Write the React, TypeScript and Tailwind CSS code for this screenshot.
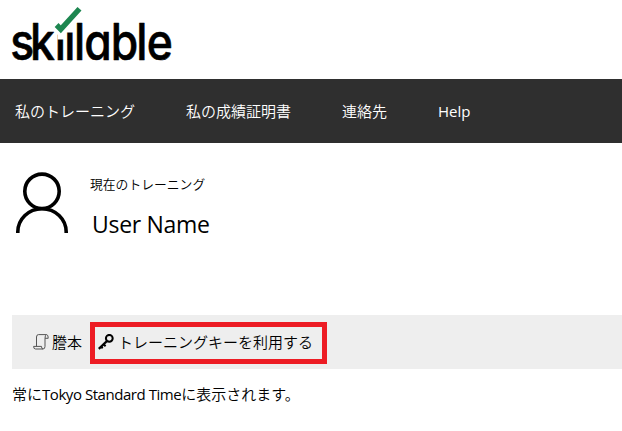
import React from 'react';

const navItems = [
  { label: '私のトレーニング', width: 'w-[171px]', weight: 'font-[350]' },
  { label: '私の成績証明書', width: 'w-[156px]', weight: 'font-[350]' },
  { label: '連絡先', width: 'w-[96px]', weight: 'font-[350]' },
  { label: 'Help', width: 'w-[60px]', weight: 'font-normal' },
];

function Logo() {
  return (
    <svg className="block h-[79px] w-[200px]" viewBox="0 0 200 79" role="img" aria-label="skillable">
      <text
        x="11.6 34.2 62.2 73 84.2 95.6 126 154.8 166.8"
        y="59.6"
        fontSize="50.5"
        fontWeight="500"
        stroke="#000"
        strokeWidth="0.6"
        strokeLinejoin="round"
        transform="scale(0.88 1)"
        className="font-['Inter',sans-serif]"
        style={{ fontFeatureSettings: '"cv11" 1' }}
      >
        skıllable
      </text>
      {/* Clears the letter tops around the check mark */}
      <path d="M54 29 L56 18 H75 V32.5 H65.5 V39.5 H57.5 V35 Z" fill="#fff" />
      <path d="M56.6 25 L60.8 29.3 L79.5 8.8" fill="none" stroke="#1d8650" strokeWidth="5.4" />
    </svg>
  );
}

function UserIcon() {
  return (
    <svg className="block h-[62px] w-[54px]" viewBox="0 0 54 62" fill="none" stroke="#000" strokeWidth="3.6">
      <circle cx="27" cy="19.3" r="17.2" />
      <path d="M2.8 61 V60 A24.2 23.3 0 0 1 51.2 60 V61" />
    </svg>
  );
}

function ScrollIcon() {
  return (
    <svg className="block h-4 w-4" viewBox="0 0 16 16" fill="none" stroke="#555" strokeWidth="1">
      <path d="M3.5 12.4 V3 Q3.5 .6 5.5 .6 H13.5 Q15.4 .8 15.2 4.3 H12 V12.4 Q12 15 10 15 H2.5 Q.6 15 .6 12.4 H8.5 Q8.5 15 10 15 M13.5 .6 Q12 1 12 4.3" />
    </svg>
  );
}

function KeyIcon() {
  return (
    <svg className="block h-4 w-4" viewBox="0 0 16 16" fill="none" stroke="#000">
      <circle cx="11.3" cy="4.3" r="3.4" strokeWidth="2" />
      <path d="M9 7 L.8 14.8" strokeWidth="2.4" />
      <path d="M5.3 10 L7.6 12.2 M2.8 12.3 L4.7 14.3" strokeWidth="2" />
    </svg>
  );
}

export default function App() {
  return (
    <div className="h-[431px] w-[622px] overflow-hidden bg-white font-['Open_Sans','Noto_Sans_CJK_JP',sans-serif] text-[15px] font-[350] text-black" lang="ja">
      <header className="h-[79px]">
        <Logo />
      </header>
      <nav className="flex h-16 items-center bg-[#2f2f2f] pl-[15px] text-white">
        {navItems.map((item) => (
          <a key={item.label} className={`${item.width} ${item.weight} whitespace-nowrap leading-6`}>
            {item.label}
          </a>
        ))}
      </nav>
      <section className="flex h-[172px] pl-[15px] pt-[29px]">
        <UserIcon />
        <div className="pl-[21px]">
          <div className="h-6 text-[12.8px] leading-6">現在のトレーニング</div>
          <div className="mt-[12px] pl-[2px] text-[23px] font-normal leading-8 tracking-[-0.3px]">User Name</div>
        </div>
      </section>
      <div className="ml-3 flex h-[54px] items-center bg-[#eee] pl-[21px]">
        <a className="flex w-[57px] items-center gap-[3px] whitespace-nowrap">
          <ScrollIcon />
          <span className="leading-6">謄本</span>
        </a>
        <a className="mt-[2px] flex h-[42px] w-[237px] items-center gap-1 whitespace-nowrap border-[5px] border-[#ed1c24] pb-[2px] pl-[3px]">
          <KeyIcon />
          <span className="leading-6">トレーニングキーを利用する</span>
        </a>
      </div>
      <p className="whitespace-nowrap pl-3 pt-[13px] leading-6">
        常に<span className="font-normal tracking-[-0.45px]">Tokyo Standard Time</span>に表示されます。
      </p>
    </div>
  );
}
